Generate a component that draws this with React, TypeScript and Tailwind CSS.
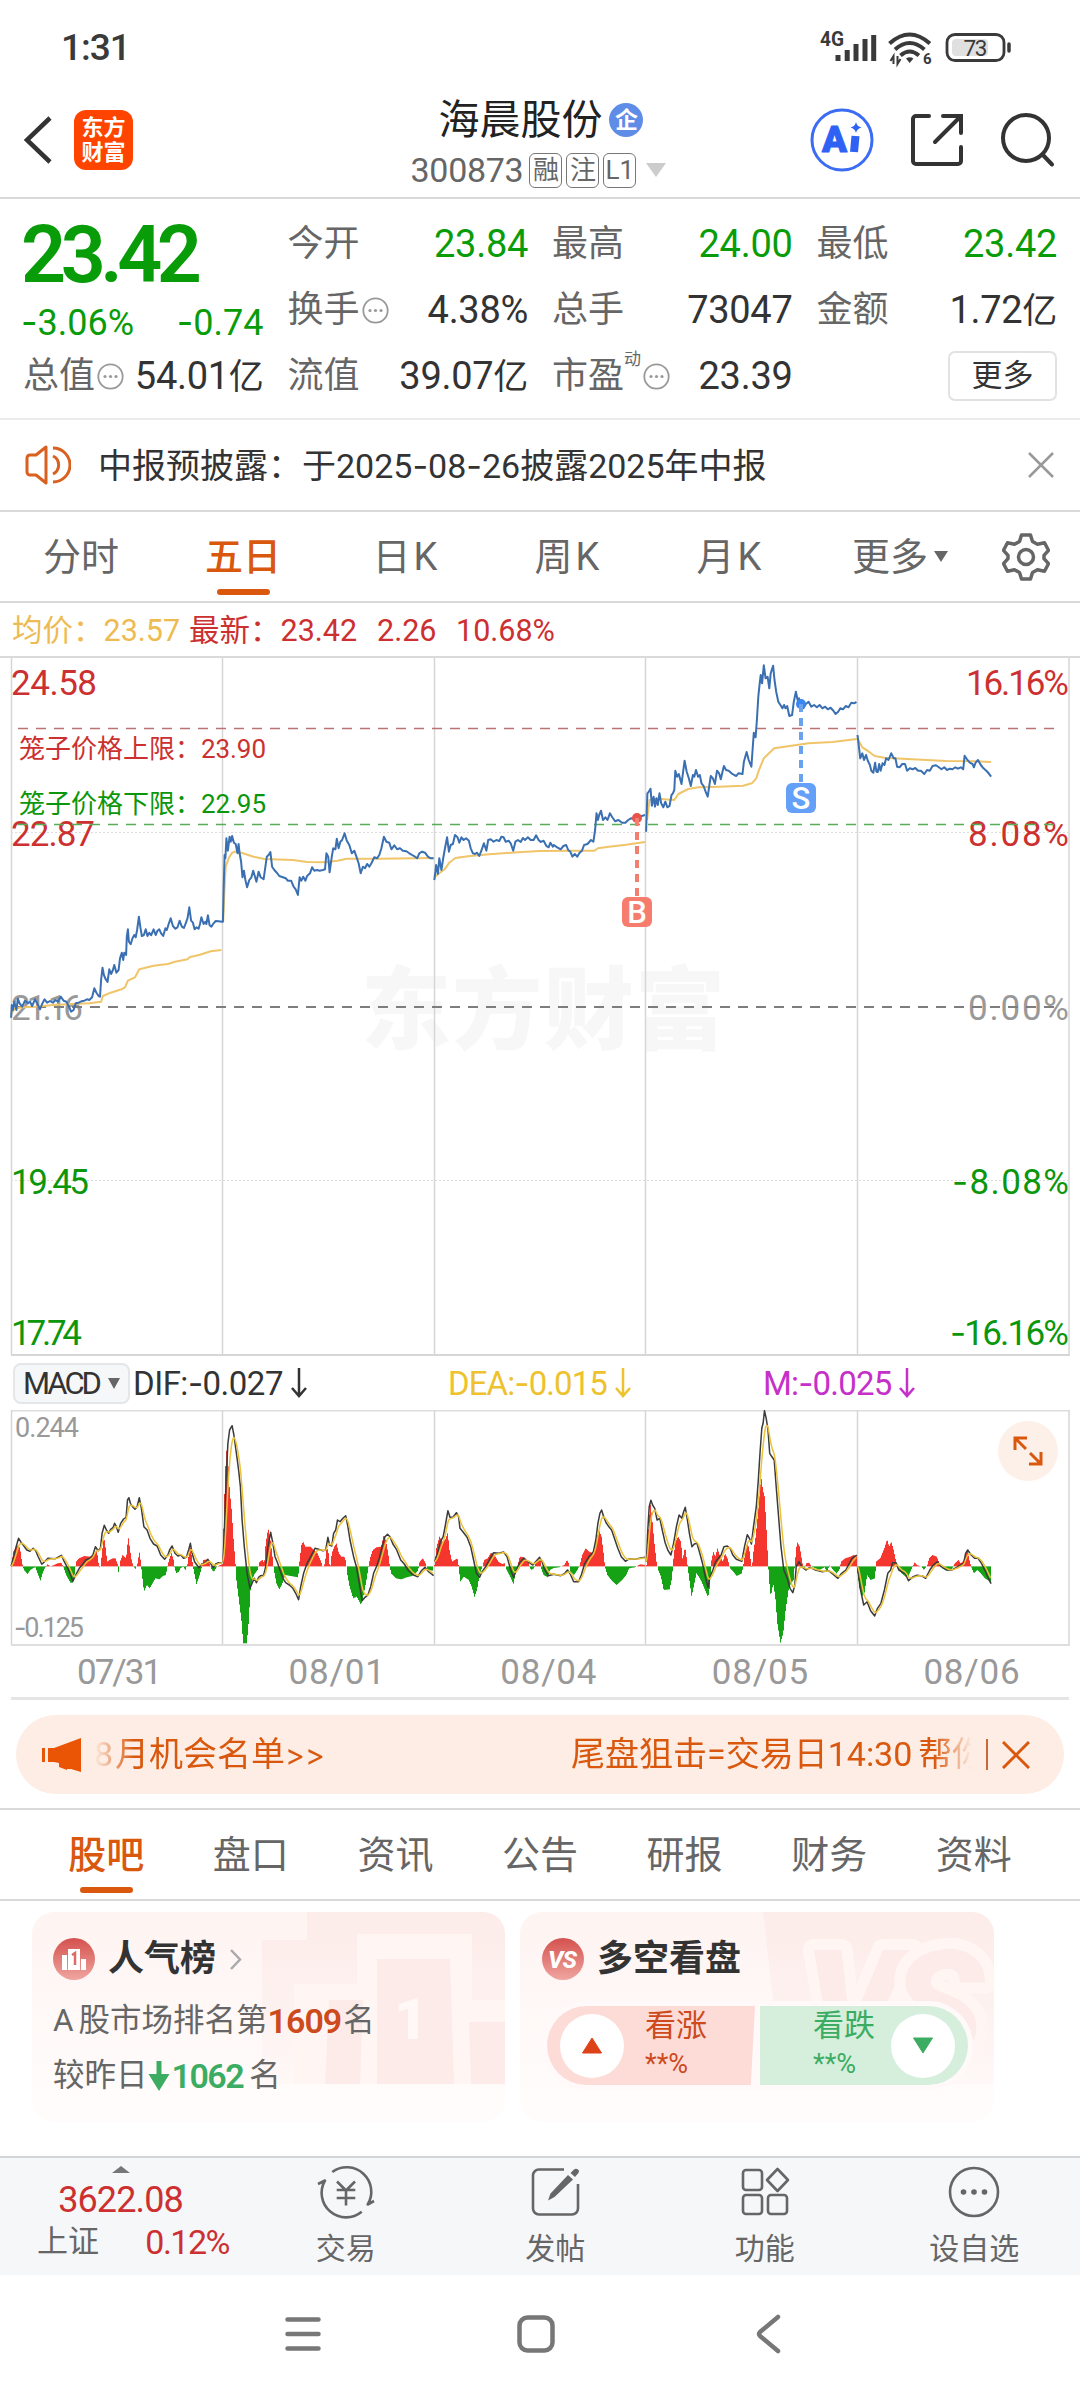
import type { ReactNode } from "react";

type Point = [number, number];

// Samples are stored on a 3x vertical grid, split in a left and a right half
interface Half {
  offset: number;
  scale: number;
}

const LEFT: Half = { offset: 0, scale: 2.8 };
const RIGHT: Half = { offset: 540, scale: 2.904 };

function parse(raw: string, half: Half): Point[] {
  return raw.split(" ").map((pair) => {
    const [x, y] = pair.split(",").map(Number);
    return [half.offset + x / half.scale, y / 3];
  });
}

const PRICE: Point[][] = [
  parse(
    "31,1133 33,1095 36,1110 40,1085 46,1110 50,1076 55,1090 62,1100 70,1082 78,1090 84,1085 90,1098 98,1078 104,1090 112,1108 118,1092 125,1078 132,1088 140,1083 148,1088 155,1080 162,1085 170,1070 178,1082 186,1085 192,1098 199,1115 206,1110 212,1090 220,1088 228,1084 236,1082 244,1078 250,1080 258,1072 264,1045 270,1058 276,1068 280,1070 283,1020 287,983 291,1005 296,1018 301,1026 306,988 311,1002 316,990 320,975 326,998 332,990 336,955 341,938 345,960 348,938 353,945 355,890 358,868 361,905 366,913 371,895 376,885 380,892 384,870 389,830 393,862 397,888 403,885 408,868 413,888 418,878 423,886 430,868 436,885 441,872 446,868 451,880 457,888 463,865 467,870 473,850 478,835 484,858 491,866 497,862 503,842 509,860 515,864 520,850 525,835 530,802 535,842 540,848 545,868 550,862 556,866 560,852 564,832 570,852 575,845 578,852 582,826 587,856 592,860 598,850 604,843 612,844 622,845 624,845 626,750 629,645 631,655 634,595 638,632 643,590 646,605 650,588 655,608 660,612 665,640 668,612 671,640 675,665 679,712 683,692 687,720 692,742 698,720 704,712 709,692 714,710 718,725 724,695 730,712 738,718 743,680 747,650 752,645 757,636 762,680 768,690 775,698 782,708 792,712 800,715 806,722 815,722 822,740 828,748 834,765 839,712 844,722 849,710 855,722 860,708 868,700 874,682 880,692 888,690 895,692 904,690 910,688 914,640 919,650 923,697 929,650 933,625 939,628 943,596 948,625 953,605 958,600 965,580 971,602 978,615 985,640 992,632 998,650 1004,670 1010,700 1016,680 1022,685 1028,672 1034,680 1040,670 1048,652 1056,655 1062,645 1068,625 1075,590 1082,605 1090,608 1096,628 1104,616 1112,628 1120,625 1128,632 1138,634 1146,640 1154,645 1162,650 1168,655 1174,640 1182,635 1190,638 1198,650 1206,655 1214,655",
    LEFT,
  ),
  [
    ...parse(
      "1216,720 1219,695 1221,675 1226,702 1230,655 1236,690 1241,655 1246,625 1252,592 1257,635 1262,615 1268,612 1274,585 1281,592 1286,608 1292,592 1298,600 1305,595 1313,602 1318,625 1324,640 1330,642 1336,638 1342,648 1349,628 1355,610 1362,632 1367,600 1374,598 1382,605 1390,600 1398,603 1404,590 1410,592 1416,605 1424,602 1430,610 1437,632 1443,605 1450,600 1458,606 1464,594 1470,600 1478,592 1486,600 1494,600 1501,586 1508,600 1514,606 1522,602 1530,618 1536,622 1541,608 1548,620",
      LEFT,
    ),
    ...parse(
      "40,615 50,622 60,628 68,618 76,615 82,630 88,635 94,650 101,642 108,650 115,638 122,632 128,615 138,612 148,600 155,605 160,570 164,520 168,540 172,525 177,512 183,540 190,532 196,540 203,520 210,532 218,544 228,540 238,548 248,548 256,540 264,535 272,536 281,533 290,530 298,527 305,525",
      RIGHT,
    ),
  ],
  parse(
    "308,575 310,520 312,460 316,455 321,446 325,497 330,470 334,500 338,475 342,495 347,460 352,490 358,502 364,485 370,502 376,498 382,465 386,460 390,450 393,392 398,410 403,402 411,432 415,400 420,362 426,395 432,415 438,438 444,405 448,410 453,390 459,410 464,405 469,430 475,438 481,455 487,470 492,435 496,408 502,415 508,432 514,392 520,400 525,418 530,395 534,378 540,390 548,392 556,400 564,405 570,408 576,400 588,402 592,365 600,336 606,360 614,380 618,320 621,278 626,292 630,240 634,170 638,130 641,105 645,130 650,76 655,115 661,110 666,145 670,100 677,77 681,120 686,155 692,185 698,195 704,205 709,195 713,205 718,198 724,228 732,225 737,185 743,155 748,180 752,175 758,195 765,205 772,192 780,185 788,200 796,195 804,202 812,195 820,205 828,200 836,208 844,203 852,212 858,222 866,215 872,205 880,208 888,198 896,202 904,188 912,190 919,186",
    RIGHT,
  ),
  parse(
    "922,285 926,320 930,355 936,340 941,360 947,345 952,362 958,375 962,392 968,398 973,368 977,395 981,396 985,372 989,392 995,370 1000,375 1005,355 1012,360 1020,340 1027,355 1032,355 1037,380 1044,382 1052,372 1060,372 1066,392 1074,385 1082,388 1090,384 1098,392 1106,392 1116,402 1124,390 1132,392 1140,378 1150,376 1158,382 1166,388 1174,382 1182,390 1190,386 1198,388 1206,382 1214,386 1222,382 1229,388 1233,347 1240,358 1248,368 1256,372 1260,382 1265,368 1272,360 1280,375 1288,385 1296,392 1303,400 1310,410",
    RIGHT,
  ),
];

const AVERAGE: Point[][] = [
  parse(
    "31,1122 40,1108 60,1102 100,1100 150,1095 200,1092 250,1090 283,1085 288,1068 310,1058 340,1048 350,1042 358,1022 378,1012 390,988 430,977 470,972 490,965 525,958 530,952 560,944 590,934 620,930",
    LEFT,
  ),
  parse(
    "625,845 628,760 632,680 640,655 650,638 662,634 680,640 710,650 740,657 820,660 860,666 910,667 945,662 970,656 1060,656 1214,654",
    LEFT,
  ),
  [
    ...parse("1217,712 1230,700 1245,688 1258,668 1275,654 1310,649 1370,643 1450,637", LEFT),
    ...parse("0,633 90,632 158,632 168,625 200,620 250,614 305,606", RIGHT),
  ],
  parse(
    "311,540 318,480 340,476 390,480 402,462 430,447 460,442 520,440 590,437 615,430 628,415 636,390 650,355 680,325 730,317 780,310 850,306 920,297",
    RIGHT,
  ),
  parse("924,300 936,322 955,335 972,348 1000,353 1080,358 1180,363 1260,364 1310,366", RIGHT),
];

const HISTOGRAM: Point[][] = [
  parse(
    "31,675 36,635 45,620 50,615 55,625 60,665 63,679 66,690 76,702 84,690 92,684 98,682 104,700 112,722 118,700 124,685 132,673 140,679 150,675 160,670 170,668 176,680 184,705 196,728 203,728 208,700 212,665 220,655 235,648 250,650 262,645 270,630 274,665 277,682 281,679 284,640 290,590 294,620 299,665 305,660 315,655 322,655 328,672 331,700 335,665 342,645 352,655 358,590 363,630 368,665 373,679 378,687 384,670 389,635 393,665 396,700 402,755 410,735 418,745 426,730 434,715 445,718 455,708 463,705 467,685 472,660 479,640 485,660 487,680 492,700 500,695 504,685 512,680 518,690 524,672 531,615 537,660 541,690 549,732 555,715 562,690 568,660 580,658 587,675 592,690 598,695 606,680 622,672",
    LEFT,
  ),
  parse(
    "624,675 629,480 634,330 639,340 644,450 650,515 655,600 660,665 663,720 670,780 677,840 682,910 692,910 697,850 703,740 712,705 722,690 728,665 736,660 741,670 745,610 752,565 757,590 763,640 768,690 775,730 783,748 790,735 800,705 815,708 836,712 839,670 845,615 850,605 856,620 870,620 880,630 890,640 900,665 905,682 911,670 916,620 921,640 925,690 930,640 937,620 943,610 950,640 957,650 965,650 970,665 973,700 980,740 990,775 1000,770 1012,795 1020,760 1027,720 1033,680 1037,655 1045,630 1055,622 1068,620 1076,583 1082,605 1088,640 1092,675 1096,700 1110,715 1125,718 1140,712 1155,708 1165,700 1172,690 1176,665 1185,655 1192,668 1198,690 1214,692",
    LEFT,
  ),
  [
    ...parse(
      "1216,675 1222,620 1230,590 1238,605 1246,600 1253,578 1258,630 1265,665 1280,655 1284,680 1288,725 1298,710 1312,720 1320,740 1328,770 1335,750 1343,700 1350,680 1355,660 1365,655 1374,638 1384,645 1395,665 1405,672 1412,670 1418,690 1428,710 1437,732 1443,700 1449,675 1455,650 1466,652 1478,665 1486,690 1495,685 1502,660 1512,655",
      LEFT,
    ),
    ...parse(
      "4,690 10,705 22,712 28,690 40,684 55,682 70,675 78,660 84,672 88,695 98,705 108,690 115,675 122,645 132,625 142,635 155,640 163,600 170,568 178,590 184,640 188,680 195,705 208,722 222,735 238,720 250,705 258,685 275,682 290,673 305,675",
      RIGHT,
    ),
  ],
  parse(
    "308,675 313,580 319,490 324,530 330,600 337,665 342,690 350,710 358,750 375,748 382,715 386,660 392,605 400,590 408,605 413,660 420,620 426,665 430,700 439,770 446,735 453,700 460,710 468,725 478,750 487,772 492,740 496,665 502,635 508,650 514,625 522,650 530,665 536,640 543,655 551,685 560,695 570,708 585,700 590,670 600,605 606,625 611,665 614,690 618,640 625,590 632,520 641,410 646,450 651,470 656,560 661,665 664,720 669,770 676,730 682,770 688,850 697,908 705,880 712,810 722,740 735,720 739,670 745,605 753,620 760,665 765,690 772,670 780,668 788,680 810,690 825,682 832,695 840,675 850,690 860,700 868,690 873,665 885,655 900,650 910,645 920,650",
    RIGHT,
  ),
  parse(
    "922,700 928,745 934,770 942,760 950,705 960,720 973,715 976,665 988,655 1000,625 1008,598 1014,620 1020,605 1027,630 1034,665 1038,685 1050,700 1062,710 1070,708 1080,685 1088,667 1095,675 1108,680 1115,690 1125,675 1130,655 1140,645 1152,650 1160,670 1168,685 1180,692 1195,690 1203,672 1215,660 1222,670 1230,662 1236,645 1241,632 1247,660 1252,680 1260,700 1270,690 1280,700 1292,715 1300,720 1310,728",
    RIGHT,
  ),
];

const DIF: Point[][] = [
  parse(
    "31,679 38,650 45,620 52,595 58,605 65,615 75,630 84,634 93,625 100,632 107,650 117,673 125,665 134,655 155,656 172,646 180,665 192,690 204,724 212,705 222,685 232,672 240,660 252,655 260,645 267,620 275,632 281,625 286,580 292,556 298,570 304,580 310,568 317,562 321,550 326,560 331,577 338,550 346,537 353,532 357,480 361,473 365,490 371,500 378,508 384,500 390,473 396,505 403,560 412,570 420,595 430,612 440,618 450,645 461,658 470,645 475,630 482,618 490,640 498,648 506,645 514,655 522,652 528,630 533,610 538,640 545,665 557,683 565,672 575,668 582,658 588,668 597,683 604,672 612,668 622,669",
    LEFT,
  ),
  parse(
    "624,665 628,580 633,420 638,310 643,270 650,257 655,285 662,340 668,390 673,440 678,540 684,620 692,700 700,745 706,730 712,715 718,728 724,712 730,707 738,706 744,680 750,620 758,577 764,610 770,650 776,665 784,690 792,715 800,728 810,735 820,745 828,760 836,779 842,740 850,700 860,670 870,650 882,625 892,628 904,632 912,630 918,592 923,615 929,618 934,580 940,570 945,540 952,545 960,535 968,527 974,560 980,600 990,650 998,680 1006,730 1014,782 1022,772 1030,765 1038,740 1046,700 1054,680 1062,655 1070,620 1078,590 1085,583 1092,590 1100,612 1110,628 1122,660 1132,672 1142,690 1156,704 1170,710 1180,692 1190,682 1200,695 1214,707",
    LEFT,
  ),
  [
    ...parse(
      "1217,665 1225,640 1233,605 1241,590 1247,555 1254,512 1260,532 1268,532 1278,518 1284,530 1288,565 1296,575 1308,592 1318,620 1326,660 1334,700 1343,712 1350,695 1360,680 1370,660 1382,638 1396,640 1410,636 1420,650 1430,690 1438,712 1446,690 1455,668 1467,654 1478,665 1492,675 1500,665 1511,652",
      LEFT,
    ),
    ...parse(
      "6,665 12,685 24,707 40,703 60,707 72,700 80,690 88,702 98,725 112,725 120,705 130,670 142,650 155,635 162,600 168,550 174,520 179,510 185,530 192,548 200,560 208,570 216,595 226,625 236,650 248,664 260,656 275,658 305,652",
      RIGHT,
    ),
  ],
  parse(
    "309,665 313,570 317,500 322,481 327,495 333,505 340,540 348,535 356,575 364,610 372,632 380,645 388,610 396,560 404,525 412,535 417,515 422,502 428,540 434,580 441,620 448,612 456,610 464,640 472,670 480,710 488,742 494,710 502,690 510,665 518,655 526,645 534,620 544,618 552,625 560,645 570,658 586,664 594,620 602,584 608,595 614,612 620,560 628,500 634,420 639,340 644,265 648,250 652,212 657,235 662,270 667,340 672,348 680,360 686,440 692,520 700,620 708,690 718,715 726,745 734,758 740,735 744,680 752,665 760,680 772,690 784,682 800,690 820,695 838,692 850,702 865,715 876,700 888,690 896,675 906,655 920,645",
    RIGHT,
  ),
  parse(
    "922,679 930,745 940,795 950,785 960,812 972,828 980,805 990,790 1000,750 1010,700 1018,690 1024,668 1034,668 1042,690 1050,695 1060,700 1070,722 1084,710 1095,706 1110,708 1120,715 1132,690 1142,675 1154,665 1165,680 1182,690 1196,690 1210,682 1222,675 1230,670 1236,640 1242,630 1252,645 1262,655 1272,655 1282,670 1294,695 1302,715 1310,731",
    RIGHT,
  ),
];

const ZERO = 226.4;

function line(points: Point[]) {
  return "M" + points.map(([x, y]) => `${x.toFixed(1)} ${y.toFixed(1)}`).join("L");
}

// one sample per pixel column
function resample(points: Point[], step = 1): Point[] {
  const out: Point[] = [];
  const last = points[points.length - 1][0];
  let i = 0;
  for (let x = points[0][0]; x <= last; x += step) {
    while (i < points.length - 2 && points[i + 1][0] < x) i++;
    const [x0, y0] = points[i];
    const [x1, y1] = points[i + 1];
    out.push([x, y0 + ((y1 - y0) * (x - x0)) / (x1 - x0)]);
  }
  return out;
}

function ema(points: Point[], alpha: number): Point[] {
  let value = points[0][1];
  return resample(points).map(([x, y]) => {
    value += alpha * (y - value);
    return [x, value];
  });
}

function bars(points: Point[], up: boolean) {
  return resample(points)
    .filter(([, y]) => (up ? y < ZERO : y > ZERO))
    .map(([x, y]) => `M${(Math.floor(x) + 0.5).toFixed(1)} ${ZERO}V${y.toFixed(1)}`)
    .join("");
}

const COLUMNS = [11.5, 222.5, 434.5, 645.5, 857.5, 1069];

// Roboto's hyphen is short and low next to digits, Inter's sits at mid height
function Num({ text }: { text: string }) {
  return (
    <>
      {text.split(/(-)/).map((part, i) =>
        part === "-" ? <span key={i} className="font-[Inter]">-</span> : part,
      )}
    </>
  );
}

function StatusBar() {
  return (
    <div className="flex h-[95px] items-center justify-between pr-[66px] pl-[61px]">
      <span className="text-[37px] font-medium tracking-[-1px] text-[#3a3a3a]">1:31</span>
      <svg width="194" height="40" viewBox="0 0 194 40" fill="none" className="mt-1">
        <text x="0" y="15.500" fontSize="20" fontWeight="700" fill="#3a3a3a" textLength="24" lengthAdjust="spacingAndGlyphs">4G</text>
        <path d="M18 31v-6M27.200 31v-11M36 31v-17M45 31v-22M53.700 31v-26" stroke="#3a3a3a" strokeWidth="5" />
        <g stroke="#3a3a3a" strokeWidth="4">
          <path d="M69.500 13.500q20-18 40.400 0M75 19.500q14.700-13 29.400 0M80.500 25.500q9.200-8 18.400 0" />
        </g>
        <path d="M86 28.500q3.700-2.500 7.400 0l-3.700 4.500z" fill="#3a3a3a" />
        <path d="M73.500 34v-8l-3 5M77.500 26v8l3-5" stroke="#3a3a3a" strokeWidth="2" />
        <text x="103" y="34" fontSize="15" fontWeight="700" fill="#3a3a3a">6</text>
        <rect x="127" y="4.500" width="57" height="26" rx="8" stroke="#3a3a3a" strokeWidth="2.800" />
        <rect x="132" y="9" width="36" height="17" rx="4" fill="#e0e0e0" />
        <path d="M189 14v7" stroke="#3a3a3a" strokeWidth="3.500" strokeLinecap="round" />
        <text x="143.500" y="25.500" fontSize="22.500" fill="#3a3a3a" textLength="24">73</text>
      </svg>
    </div>
  );
}

function Tag({ children }: { children: ReactNode }) {
  return (
    <span className="flex h-[35px] w-[33px] items-center justify-center rounded-[6px] border-[1.500px] border-[#777] text-[26px] leading-none text-[#666]">
      {children}
    </span>
  );
}

function Header() {
  return (
    <div className="flex h-[104px] justify-between border-b-2 border-[#d9d9d9] pr-[24px] pl-[22px]">
      <div className="flex w-[350px] items-center pb-[12px]">
        <svg width="32" height="50" viewBox="0 0 32 50" fill="none">
          <path d="M28 3L5 25l23 22" stroke="#333" strokeWidth="4.500" />
        </svg>
        <div className="ml-[20px] flex h-[60px] w-[59px] flex-col items-center justify-center rounded-[12px] bg-[#ff4400] text-[22px] leading-[25px] font-bold text-white">
          <span>东方</span>
          <span>财富</span>
        </div>
      </div>
      <div className="flex flex-col items-center">
        <div className="mr-[-4px] flex h-[50px] items-center gap-[7px]">
          <span className="text-[41px] leading-none text-[#222]">海晨股份</span>
          <span className="flex size-[34px] items-center justify-center rounded-full bg-[#5f8ce6] text-[23px] leading-none font-bold text-white">企</span>
        </div>
        <div className="mt-[7px] mr-[1px] flex items-center gap-[4px]">
          <span className="mr-[2px] text-[34px] leading-[36px] tracking-[-0.300px] text-[#666]">300873</span>
          <Tag>融</Tag>
          <Tag>注</Tag>
          <Tag>L1</Tag>
          <svg width="20" height="14" viewBox="0 0 20 14" className="ml-[6px]">
            <path d="M0 0h20l-10 14z" fill="#ccc" />
          </svg>
        </div>
      </div>
      <div className="flex w-[350px] items-center justify-end pb-[12px]">
        <svg width="64" height="64" viewBox="0 0 64 64" fill="none">
          <circle cx="32" cy="32" r="30" stroke="#3c6cf3" strokeWidth="3" />
          <text x="12" y="44" fontSize="36" fontWeight="900" fill="#2f62f4" stroke="#2f62f4" strokeLinejoin="round" textLength="25" lengthAdjust="spacingAndGlyphs">A</text>
          <path d="M45.500 28L44 44" stroke="#2f62f4" strokeWidth="8" />
          <path d="M46 14q1 4.500 5.500 5.500q-4.500 1-5.500 5.500q-1-4.500-5.500-5.500q4.500-1 5.500-5.500" fill="#2f62f4" />
        </svg>
        <svg width="54" height="54" viewBox="0 0 54 54" fill="none" stroke="#333" strokeWidth="4" strokeLinecap="round" className="ml-[36px]">
          <path d="M19 3H6a3 3 0 0 0-3 3v42a3 3 0 0 0 3 3h42a3 3 0 0 0 3-3V34" />
          <path d="M33 3h18v17M50 4L25 29" />
        </svg>
        <svg width="56" height="56" viewBox="0 0 56 56" fill="none" stroke="#333" strokeWidth="4" strokeLinecap="round" className="ml-[36px]">
          <circle cx="26" cy="26" r="23" />
          <path d="M42.500 42.500l9.500 10" />
        </svg>
      </div>
    </div>
  );
}

function Dots() {
  return (
    <svg width="27" height="27" viewBox="0 0 27 27" fill="none" className="ml-[2px] shrink-0">
      <circle cx="13.500" cy="13.500" r="12.200" stroke="#999" strokeWidth="1.800" />
      <circle cx="8" cy="13.500" r="1.600" fill="#999" />
      <circle cx="13.500" cy="13.500" r="1.600" fill="#999" />
      <circle cx="19" cy="13.500" r="1.600" fill="#999" />
    </svg>
  );
}

function Stat({ label, value, green, dots, sup }: { label: string; value: string; green?: boolean; dots?: boolean; sup?: string }) {
  return (
    <div className="flex h-[66px] items-center whitespace-nowrap">
      <span className="text-[36px] leading-none text-[#666]">{label}</span>
      {sup && <span className="mt-[-34px] text-[17px] leading-none text-[#666]">{sup}</span>}
      {dots && <Dots />}
      <span className={green ? "ml-auto text-[38px] leading-none tracking-[-0.300px] text-[#089c08]" : "ml-auto text-[38px] leading-none tracking-[-0.300px] text-[#333]"}>
        {value.replace("亿", "")}
        {value.endsWith("亿") && <span className="text-[35px]">亿</span>}
      </span>
    </div>
  );
}

function Quote() {
  return (
    <div className="grid h-[221px] grid-cols-4 gap-x-[24px] border-b-2 border-[#ebebeb] pt-[12px] pr-[23px] pl-[23px]">
      <div>
        <div className="ml-[-2px] h-[90px] text-[79px] leading-[88px] font-semibold tracking-[-5.500px] text-[#089c08]">23.42</div>
        <div className="flex h-[42px] items-center justify-between text-[36px] leading-none text-[#089c08]">
          <span className="ml-[-2px]"><Num text="-3.06%" /></span>
          <span><Num text="-0.74" /></span>
        </div>
        <Stat label="总值" value="54.01亿" dots />
      </div>
      <div>
        <Stat label="今开" value="23.84" green />
        <Stat label="换手" value="4.38%" dots />
        <Stat label="流值" value="39.07亿" />
      </div>
      <div>
        <Stat label="最高" value="24.00" green />
        <Stat label="总手" value="73047" />
        <Stat label="市盈" value="23.39" dots sup="动" />
      </div>
      <div>
        <Stat label="最低" value="23.42" green />
        <Stat label="金额" value="1.72亿" />
        <div className="flex h-[66px] items-center justify-end">
          <span className="flex h-[50px] w-[109px] items-center justify-center rounded-[7px] border-2 border-[#e2e2e2] text-[31px] text-[#333]">更多</span>
        </div>
      </div>
    </div>
  );
}

function Notice() {
  return (
    <div className="flex h-[92px] items-center border-b-2 border-[#d9d9d9] pr-[26px] pl-[25px]">
      <svg width="46" height="40" viewBox="0 0 46 40" fill="none" stroke="#d9601f" strokeWidth="3" strokeLinejoin="round">
        <path d="M21 2L11 10H5a3 3 0 0 0-3 3v14a3 3 0 0 0 3 3h6l10 8z" />
        <path d="M28 11a10 10 0 0 1 0 18M28 3a17 17 0 0 1 0 34" />
      </svg>
      <span className="mt-[1px] ml-[27px] flex-1 text-[34px] text-[#333]"><Num text="中报预披露：于2025-08-26披露2025年中报" /></span>
      <svg width="26" height="26" viewBox="0 0 26 26" stroke="#999" strokeWidth="2.500">
        <path d="M1 1l24 24M25 1L1 25" />
      </svg>
    </div>
  );
}

const PERIODS = ["分时", "五日", "日K", "周K", "月K"];

function PeriodTabs() {
  return (
    <div className="flex h-[91px] border-b-2 border-[#d9d9d9]">
      {PERIODS.map((name) => (
        <div
          key={name}
          className={
            name === "五日"
              ? "flex w-[162px] flex-col items-center text-[38px] font-medium text-[#d9580e]"
              : "flex w-[162px] flex-col items-center text-[38px] text-[#666]"
          }
        >
          <span className="mt-[18px] leading-[54px]">{name.replace("K", "")}{name.endsWith("K") && <span className="ml-[3px]">K</span>}</span>
          {name === "五日" && <span className="mt-[5px] h-[6px] w-[53px] rounded-full bg-[#d9580e]" />}
        </div>
      ))}
      <div className="flex flex-1 items-center pl-[42px] text-[38px] text-[#666]">
        <span className="leading-[54px]">更多</span>
        <svg width="14" height="11" viewBox="0 0 14 11" className="ml-[6px]">
          <path d="M0 0h14l-7 11z" fill="#666" />
        </svg>
      </div>
      <div className="flex w-[78px] items-center">
        <svg width="48" height="48" viewBox="0 0 48 48" fill="none" stroke="#666" strokeWidth="3.500" strokeLinejoin="round">
          <path d="M19.500 2h9l2 6.500l5 2.800l7-1.500l4 7.500l-4.500 5v3.400l4.500 5l-4 7.500l-7-1.500l-5 2.800l-2 6.500h-9l-2-6.500l-5-2.800l-7 1.500l-4-7.500l4.500-5v-3.400l-4.500-5l4-7.500l7 1.500l5-2.800z" />
          <circle cx="24" cy="24" r="7.500" />
        </svg>
      </div>
    </div>
  );
}

function Legend() {
  return (
    <div className="flex h-[55px] items-center border-b-2 border-[#d9d9d9] pt-[2px] pl-[12px] text-[30.500px] whitespace-pre text-[#cc3030]">
      <span className="w-[177px] text-[#edbb52]">均价：23.57</span>
      <span className="w-[188px]">最新：23.42</span>
      <span className="w-[79px]">2.26</span>
      <span>10.68%</span>
    </div>
  );
}

interface AxisLabelProps {
  y: number;
  left: string;
  leftWidth: number;
  right: string;
  rightWidth: number;
  color: string;
}

function AxisLabel({ y, left, leftWidth, right, rightWidth, color }: AxisLabelProps) {
  return (
    <g fill={color} fontSize="35">
      <text x="11" y={y} textLength={leftWidth}>{left}</text>
      <text x={1069 - rightWidth} y={y} textLength={rightWidth}>
        {right.startsWith("-") && <tspan fontFamily="Inter">-</tspan>}
        {right.replace("-", "")}
      </text>
    </g>
  );
}

function PriceChart() {
  return (
    <svg width="1080" height="698" viewBox="0 1 1080 698" fill="none" className="block">
      <text x="361" y="385" fontSize="90" fontWeight="900" fill="#f7f7f7" textLength="364">东方财富</text>
      {COLUMNS.map((x) => (
        <path key={x} d={`M${x} 0V698`} stroke="#d6d6d6" strokeWidth="1.500" />
      ))}
      <path d="M11 698H1070" stroke="#d6d6d6" strokeWidth="2" />
      <path d="M11 175.500H1069M11 523.500H1069" stroke="#ddd" strokeDasharray="2 2" />
      <AxisLabel y={38} left="24.58" leftWidth={86} right="16.16%" rightWidth={103} color="#cc3030" />
      <AxisLabel y={189} left="22.87" leftWidth={84} right="8.08%" rightWidth={101} color="#cc3030" />
      <AxisLabel y={363} left="21.16" leftWidth={72} right="0.00%" rightWidth={101} color="#999" />
      <AxisLabel y={537} left="19.45" leftWidth={78} right="-8.08%" rightWidth={117} color="#0b960b" />
      <AxisLabel y={688} left="17.74" leftWidth={71} right="-16.16%" rightWidth={119} color="#0b960b" />
      <path d="M18 71.500H1056" stroke="#bd7272" strokeWidth="1.500" strokeDasharray="10 8" />
      <path d="M18 167.500H1056" stroke="#58ad58" strokeWidth="1.500" strokeDasharray="10 8" />
      <path d="M18 350H1056" stroke="#7d7d7d" strokeWidth="2" strokeDasharray="10 8" />
      <text x="19" y="101" fontSize="26" fill="#cc3030">笼子价格上限：<tspan x="201" textLength="65">23.90</tspan></text>
      <text x="19" y="156" fontSize="26" fill="#0b960b">笼子价格下限：<tspan x="201" textLength="65">22.95</tspan></text>
      <g transform="translate(0 -17)" strokeWidth="2" strokeLinejoin="round">
        {AVERAGE.map((points, i) => (
          <path key={i} d={line(points)} stroke="#f0c469" />
        ))}
        {PRICE.map((points, i) => (
          <path key={i} d={line(points)} stroke="#3a70b2" />
        ))}
      </g>
      <circle cx="637" cy="161" r="5" fill="#e8534a" />
      <path d="M637 161V240" stroke="#f37f70" strokeWidth="4" strokeDasharray="8 6" />
      <rect x="622" y="240" width="30" height="30" rx="6" fill="#f67d6e" />
      <text x="637" y="265.500" fontSize="31" fontWeight="500" fill="#fff" textAnchor="middle">B</text>
      <circle cx="801" cy="47" r="5" fill="#3a86f0" />
      <path d="M801 47V126" stroke="#6ba2ee" strokeWidth="4" strokeDasharray="8 6" />
      <rect x="786" y="126" width="30" height="30" rx="6" fill="#64a0f7" />
      <text x="801" y="152" fontSize="31" fontWeight="500" fill="#fff" textAnchor="middle">S</text>
    </svg>
  );
}

function DownArrow() {
  return (
    <svg width="16" height="30" viewBox="0 0 16 30" fill="none" stroke="currentColor" strokeWidth="2.500" className="ml-[8px]">
      <path d="M8 0v28M1 20l7 8l7-8" />
    </svg>
  );
}

function MacdHeader() {
  return (
    <div className="flex h-[54px] items-center pl-[13px] text-[33px] leading-none text-[#333]">
      <div className="mr-[3px] flex h-[41px] w-[117px] items-center justify-between rounded-[8px] border-2 border-[#e4e6ea] bg-[#f6f7f9] pr-[8px] pl-[8px]">
        <span className="text-[31px] tracking-[-3px]">MACD</span>
        <svg width="12" height="11" viewBox="0 0 12 11">
          <path d="M0 0h12l-6 11z" fill="#666" />
        </svg>
      </div>
      <div className="flex w-[315px] items-center">
        <span className="tracking-[-0.500px]"><Num text="DIF:-0.027" /></span>
        <DownArrow />
      </div>
      <div className="flex w-[315px] items-center text-[#edc22e]">
        <span className="tracking-[-0.900px]"><Num text="DEA:-0.015" /></span>
        <DownArrow />
      </div>
      <div className="flex items-center text-[#c530c9]">
        <span className="tracking-[-0.800px]"><Num text="M:-0.025" /></span>
        <DownArrow />
      </div>
    </div>
  );
}

function MacdChart() {
  return (
    <div className="relative h-[236px]">
      <svg width="1080" height="236" viewBox="0 0 1080 236" fill="none" className="block">
        <path d="M11 .75H1070" stroke="#dedede" strokeWidth="1.500" />
        {COLUMNS.map((x) => (
          <path key={x} d={`M${x} 0V235`} stroke="#d6d6d6" strokeWidth="1.500" />
        ))}
        <path d="M11 235H1070" stroke="#dedede" strokeWidth="2" />
        <text x="15" y="27" fontSize="27" fill="#999" textLength="64">0.244</text>
        <text x="14" y="227" fontSize="27" fill="#999" textLength="70"><tspan fontFamily="Inter">-</tspan>0.125</text>
        <g transform="translate(0 -70)">
          {HISTOGRAM.map((points, i) => (
            <g key={i} strokeWidth="1">
              <path d={bars(points, true)} stroke="#f5362f" />
              <path d={bars(points, false)} stroke="#15a315" />
            </g>
          ))}
          {DIF.map((points, i) => (
            <g key={i} strokeWidth="1.500" strokeLinejoin="round">
              <path d={line(points)} stroke="#3b3b3b" />
              <path d={line(ema(points, 0.3))} stroke="#ecc23a" />
            </g>
          ))}
        </g>
      </svg>
      <div className="absolute top-[11px] right-[22px] flex size-[60px] items-center justify-center rounded-full bg-[#fdf0e9]">
        <svg width="30" height="30" viewBox="0 0 30 30" fill="none" stroke="#d9580e" strokeWidth="3">
          <path d="M2 14V2h12M2.500 2.500L13 13M28 16v12H16M27.500 27.500L17 17" />
        </svg>
      </div>
    </div>
  );
}

function Dates() {
  return (
    <div className="mx-[11px] grid h-[54px] grid-cols-5 border-b-[3px] border-[#e5e5e5] text-[35px] leading-[54px] tracking-[0.800px] text-[#999]">
      {["07/31", "08/01", "08/04", "08/05", "08/06"].map((date, i) => (
        <span key={date} className={i === 0 ? "pl-[66px] tracking-[-2px]" : "pl-[66px]"}>{date}</span>
      ))}
    </div>
  );
}

function Banner() {
  return (
    <div className="h-[110px] border-b-2 border-[#d9d9d9] px-[16px] pt-[15px]">
      <div className="flex h-[79px] items-center rounded-full bg-[#fdede4] pr-[34px] pl-[26px] text-[34px] text-[#d9580e]">
        <svg width="40" height="34" viewBox="0 0 40 34" fill="#e95504">
          <path d="M0 10h3v14H0zM6 10h6L39 0v34L29 31h-4v1l-8-3v-4l-5-1H6z" />
        </svg>
        <div className="ml-[12px] flex w-[878px] overflow-hidden whitespace-nowrap [mask-image:linear-gradient(90deg,transparent,#000_40px,#000_840px,transparent)]">
          <span className="w-[477px] shrink-0">8<span className="ml-[2px]">月机会名单</span><span className="font-[Inter] text-[30px]">&gt;&gt;</span></span>
          <span className="shrink-0">尾盘狙击=交易日<span className="mr-[6px]">14:30</span>帮你</span>
        </div>
        <span className="ml-[14px] h-[31px] w-[2px] shrink-0 bg-[#c9683a]" />
        <svg width="28" height="28" viewBox="0 0 28 28" stroke="#d9580e" strokeWidth="3" className="ml-[14px] shrink-0">
          <path d="M1 1l26 26M27 1L1 27" />
        </svg>
      </div>
    </div>
  );
}

const SECTIONS = ["股吧", "盘口", "资讯", "公告", "研报", "财务", "资料"];

function SectionTabs() {
  return (
    <div className="grid h-[91px] grid-cols-7 border-b-2 border-[#d9d9d9] px-[34px] text-[38px] text-[#666]">
      {SECTIONS.map((name, i) => (
        <div key={name} className="flex flex-col items-center">
          <span className={i === 0 ? "mt-[18px] leading-[54px] font-medium text-[#d9580e]" : "mt-[18px] leading-[54px]"}>{name}</span>
          {i === 0 && <span className="mt-[5px] h-[6px] w-[53px] rounded-full bg-[#d9580e]" />}
        </div>
      ))}
    </div>
  );
}

function RankCard() {
  return (
    <div className="relative h-[210px] w-[473px] overflow-hidden rounded-[22px] bg-linear-to-b from-[#fef4f2] to-[#fffdfc]">
      <svg width="473" height="210" viewBox="0 0 473 210" className="absolute inset-0">
        <defs>
          <linearGradient id="fade" x1="0" y1="0" x2="0" y2="1">
            <stop stopColor="#fbe6e4" stopOpacity=".6" />
            <stop offset="1" stopColor="#fbe6e4" stopOpacity=".15" />
          </linearGradient>
        </defs>
        <path d="M275 0h198v172H230V28h45z" fill="url(#fade)" />
        <path d="M325 22h115v66h33v84H262V72h63z" fill="#fff6f4" />
        <path d="M345 47h73l4 125h-77zM297 88h34l-3 84h-35zM437 110h36v62h-34z" fill="#fcebe9" />
        <text x="362" y="127" fontSize="58" fontWeight="900" fill="#fff8f6">1</text>
      </svg>
      <div className="relative pt-[26px] pl-[21px] text-[#666]">
        <div className="flex h-[42px] items-center">
          <svg width="42" height="42" viewBox="0 0 42 42">
            <defs>
              <linearGradient id="badge" x1="0" y1="0" x2="0" y2="1">
                <stop stopColor="#d4514e" />
                <stop offset="1" stopColor="#f0a5a0" />
              </linearGradient>
            </defs>
            <circle cx="21" cy="21" r="21" fill="url(#badge)" />
            <path d="M9 17h5v15H9zM15 11h12v21H15zM28 21h5v11h-5z" fill="#fff" />
            <path d="M19 17l3-2v12" stroke="#dc6a66" strokeWidth="2.500" fill="none" />
          </svg>
          <span className="ml-[13px] text-[36px] leading-none font-bold text-[#333]">人气榜</span>
          <svg width="14" height="21" viewBox="0 0 14 21" fill="none" className="ml-[13px]">
            <path d="M2 1l9 9.500L2 20" stroke="#aaa" strokeWidth="2.500" />
          </svg>
        </div>
        <div className="mt-[14px] flex h-[54px] items-center text-[31.500px]">
          <span>A</span>
          <span className="ml-[5px]">股市场排名第</span>
          <span className="text-[34px] font-semibold tracking-[-1px] text-[#cc4a1c]">1609</span>
          <span className="ml-[2px]">名</span>
        </div>
        <div className="flex h-[56px] items-center text-[31.500px]">
          <span>较昨日</span>
          <svg width="22" height="30" viewBox="0 0 22 30" fill="#3cac63">
            <path d="M8.500 0h5v13h8L11 30L.5 13h8z" />
          </svg>
          <span className="ml-[2px] text-[34px] font-semibold tracking-[-1.500px] text-[#3cac63]">1062</span>
          <span className="ml-[6px]">名</span>
        </div>
      </div>
    </div>
  );
}

function VoteCard() {
  return (
    <div className="relative h-[210px] w-[474px] overflow-hidden rounded-[22px] bg-linear-to-b from-[#fef4f2] to-[#fffdfc]">
      <svg width="474" height="210" viewBox="0 0 474 210" className="absolute inset-0">
        <path d="M243 0h231v172H263z" fill="url(#fade)" />
        <text x="284" y="146" fontSize="152" fontWeight="900" fontStyle="italic" fill="#fcebe9" stroke="#fff6f4" strokeWidth="22" strokeLinejoin="round" paintOrder="stroke" textLength="180">VS</text>
      </svg>
      <div className="relative pt-[26px] pl-[22px]">
        <div className="flex h-[42px] items-center">
          <svg width="42" height="42" viewBox="0 0 42 42">
            <circle cx="21" cy="21" r="21" fill="url(#badge)" />
            <text x="20" y="30" fontSize="24" fontWeight="800" fontStyle="italic" fill="#fff" textAnchor="middle" letterSpacing="-1">VS</text>
          </svg>
          <span className="ml-[13px] text-[36px] leading-none font-bold text-[#333]">多空看盘</span>
        </div>
      </div>
      <div className="absolute top-[89px] left-[22px] flex h-[89px] w-[431px] gap-[5px] overflow-hidden rounded-full border-[5px] border-[#fffaf9] bg-[#fffaf9] text-[31px] leading-none">
        <div className="flex flex-1 items-center bg-[#fddcd8] pl-[13px] text-[#cc4a1c] [clip-path:polygon(0_0,100%_0,98%_100%,0_100%)]">
          <span className="flex size-[64px] items-center justify-center rounded-full bg-white">
            <svg width="22" height="17" viewBox="0 0 22 17"><path d="M11 1l9.500 15H1.500z" fill="#dd4218" stroke="#dd4218" strokeLinejoin="round" /></svg>
          </span>
          <span className="mt-[-4px] ml-[21px] flex flex-col gap-[10px]">
            <span>看涨</span>
            <span className="text-[27px]">**%</span>
          </span>
        </div>
        <div className="flex flex-1 items-center justify-end bg-[#d6efdd] pr-[13px] text-[#3cac63]">
          <span className="mt-[-4px] mr-[16px] flex flex-col gap-[10px]">
            <span>看跌</span>
            <span className="text-[27px]">**%</span>
          </span>
          <span className="flex size-[64px] items-center justify-center rounded-full bg-white">
            <svg width="22" height="17" viewBox="0 0 22 17"><path d="M11 16l9.500-15H1.500z" fill="#3cac63" stroke="#3cac63" strokeLinejoin="round" /></svg>
          </span>
        </div>
      </div>
    </div>
  );
}

function BarItem({ label, children }: { label: string; children: ReactNode }) {
  return (
    <div className="flex w-[209.500px] flex-col items-center text-[30px] leading-none text-[#666]">
      <svg width="58" height="56" viewBox="0 0 58 56" fill="none" stroke="#666" strokeWidth="2.600" strokeLinejoin="round" className="mt-[6px]">
        {children}
      </svg>
      <span className="mt-[14px]">{label}</span>
    </div>
  );
}

function BottomBar() {
  return (
    <div className="flex h-[119px] border-t-2 border-[#d2d6da] bg-[#f6f7f9]">
      <div className="flex w-[241px] flex-col items-center text-[#cc3030]">
        <svg width="18" height="7" viewBox="0 0 18 7" className="mt-[8px]">
          <path d="M9 0l9 7H0z" fill="#777" />
        </svg>
        <span className="mt-[9px] text-[36px] leading-[36px] tracking-[-0.900px]">3622.08</span>
        <div className="mt-[4px] ml-[25px] flex w-[192px] items-center justify-between leading-[40px]">
          <span className="text-[31px] text-[#666]">上证</span>
          <span className="text-[34px] tracking-[-1.500px]">0.12%</span>
        </div>
      </div>
      <BarItem label="交易">
        <path d="M15.300 8A24.500 24.500 0 0 1 50.700 40.500l6.300-3.500" />
        <path d="M44.700 47.800A24.500 24.500 0 0 1 8 16.500l-7 3.500" />
        <path d="M20 17.500l9 9l9-9M29 26.500v15M19.700 26h18.600M19.700 34h18.600" />
      </BarItem>
      <BarItem label="发帖">
        <path d="M38 5.500H13a6 6 0 0 0-6 6v33a6 6 0 0 0 6 6h33a6 6 0 0 0 6-6V20" />
        <path d="M22 36.500l2.500-7L42 11l5 4.500L28.500 33z" fill="#666" stroke="none" />
        <path d="M44.500 9l3.500-3.500q2-1.500 4 0t0 4L49 13z" fill="#666" stroke="none" />
      </BarItem>
      <BarItem label="功能">
        <rect x="7" y="6" width="19" height="20" rx="3" />
        <rect x="7" y="31" width="19" height="19" rx="3" />
        <rect x="32" y="31" width="19" height="19" rx="3" />
        <path d="M41.500 5l10.500 11l-10.500 11l-10.500-11z" />
      </BarItem>
      <BarItem label="设自选">
        <circle cx="29" cy="28" r="24" />
        <g fill="#666" stroke="none">
          <circle cx="18.500" cy="28" r="2.800" />
          <circle cx="29" cy="28" r="2.800" />
          <circle cx="39.500" cy="28" r="2.800" />
        </g>
      </BarItem>
    </div>
  );
}

function SystemNav() {
  return (
    <div className="flex h-[124px] items-center pb-[7px] pl-[285px] text-[#777]">
      <svg width="36" height="36" viewBox="0 0 36 36" stroke="currentColor" strokeWidth="4.500" strokeLinecap="round">
        <path d="M2.500 3.500h31M2.500 18h31M2.500 32.500h31" />
      </svg>
      <svg width="38" height="38" viewBox="0 0 38 38" fill="none" stroke="currentColor" strokeWidth="4.500" className="ml-[196px]">
        <rect x="2.500" y="2.500" width="33" height="33" rx="8" />
      </svg>
      <svg width="26" height="40" viewBox="0 0 26 40" fill="none" stroke="currentColor" strokeWidth="4.500" strokeLinecap="round" strokeLinejoin="round" className="ml-[200px]">
        <path d="M23 3L5 18q-2 2 0 4L23 37" />
      </svg>
    </div>
  );
}

export default function App() {
  return (
    <div className="h-[2400px] w-[1080px] overflow-hidden bg-white font-[Roboto,'Noto_Sans_CJK_SC',sans-serif]">
      <StatusBar />
      <Header />
      <Quote />
      <Notice />
      <PeriodTabs />
      <Legend />
      <PriceChart />
      <MacdHeader />
      <MacdChart />
      <Dates />
      <Banner />
      <SectionTabs />
      <div className="flex h-[255px] gap-[15px] pt-[11px] pl-[32px]">
        <RankCard />
        <VoteCard />
      </div>
      <BottomBar />
      <SystemNav />
    </div>
  );
}
